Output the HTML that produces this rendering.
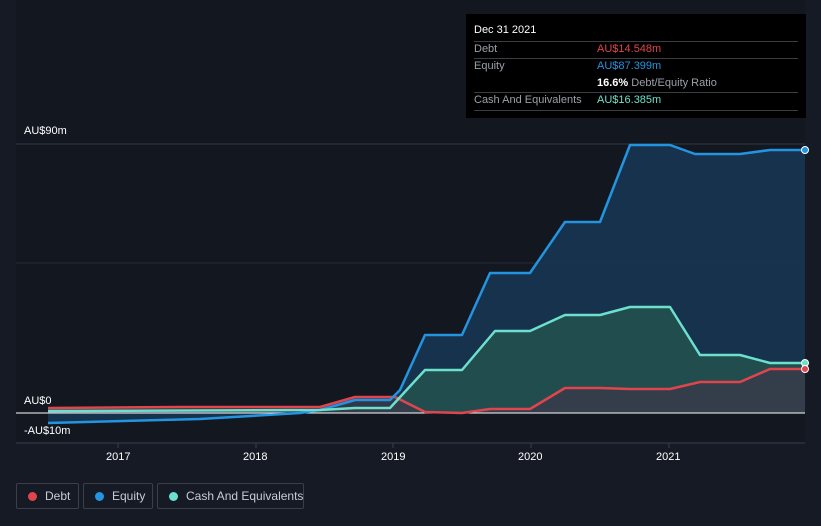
<!DOCTYPE html>
<html><head><meta charset="utf-8"><style>
body{margin:0;width:821px;height:526px;background:#151a25;font-family:"Liberation Sans",sans-serif;overflow:hidden;position:relative}
.tip{position:absolute;left:466px;top:14px;width:340px;height:104px;background:#000;color:#fff;font-size:11px}
.tip .r{position:absolute;left:8px;width:324px;border-top:1px solid #3a3d44}
.tip span{position:absolute;white-space:nowrap}
.lg{position:absolute;top:483px;height:26px;border:1px solid #3a3f4a;border-radius:2px;color:#c8ccd3;font-size:12px;line-height:24px;box-sizing:border-box;white-space:nowrap}
.lg i{position:absolute;left:11px;top:8px;width:9px;height:9px;border-radius:50%}
.lbl{position:absolute;color:#fff;font-size:11px}
</style></head><body>
<svg width="821" height="526" style="position:absolute;left:0;top:0">
<rect x="16" y="0" width="789" height="443" fill="#121720"/>
<line x1="16" y1="144" x2="805" y2="144" stroke="#333844"/>
<line x1="16" y1="263" x2="805" y2="263" stroke="#262b36"/>
<line x1="16" y1="443" x2="805" y2="443" stroke="#3a3f4a"/>
<g stroke="#3a3f4a"><line x1="118" y1="443" x2="118" y2="448"/><line x1="256" y1="443" x2="256" y2="448"/><line x1="393" y1="443" x2="393" y2="448"/><line x1="531" y1="443" x2="531" y2="448"/><line x1="669" y1="443" x2="669" y2="448"/></g>
<polygon fill="#173552" opacity="0.9" points="48,423 200,419 300,413 320,410 355,400 390,400 400,390 425,335 462,335 490,273 530,273 565,222 600,222 630,145 670,145 695,154 740,154 770,150 805,150 805,413 48,413"/>
<polygon fill="#245450" opacity="0.8" points="48,411 320,410 355,408 390,408 425,370 462,370 495,331 530,331 565,315 600,315 630,307 670,307 700,355 740,355 770,363 805,363 805,413 48,413"/>
<polygon fill="#3a3a48" opacity="0.8" points="48,408 180,407 320,407 355,397 395,397 425,412 462,413 490,409 530,409 565,388 600,388 630,389 670,389 700,382 740,382 770,369 805,369 805,413 48,413"/>
<line x1="16" y1="413" x2="805" y2="413" stroke="#fff" stroke-width="1"/>
<g fill="none" stroke-width="2.5" stroke-linejoin="round">
<polyline stroke="#e0454d" points="48,408 180,407 320,407 355,397 395,397 425,412 462,413 490,409 530,409 565,388 600,388 630,389 670,389 700,382 740,382 770,369 805,369"/>
<polyline stroke="#2394df" points="48,423 200,419 300,413 320,410 355,400 390,400 400,390 425,335 462,335 490,273 530,273 565,222 600,222 630,145 670,145 695,154 740,154 770,150 805,150"/>
<polyline stroke="#6ce0cc" points="48,411 320,410 355,408 390,408 425,370 462,370 495,331 530,331 565,315 600,315 630,307 670,307 700,355 740,355 770,363 805,363"/>
</g>
<circle cx="805" cy="150" r="3.5" fill="#2394df" stroke="#fff"/>
<circle cx="805" cy="363" r="3.5" fill="#6ce0cc" stroke="#fff"/>
<circle cx="805" cy="369" r="3.5" fill="#e0454d" stroke="#fff"/>
</svg>
<div class="lbl" style="left:24px;top:125px">AU$90m</div>
<div class="lbl" style="left:24px;top:395px">AU$0</div>
<div class="lbl" style="left:24px;top:425px">-AU$10m</div>
<div class="lbl" style="left:106px;top:451px">2017</div>
<div class="lbl" style="left:243px;top:451px">2018</div>
<div class="lbl" style="left:381px;top:451px">2019</div>
<div class="lbl" style="left:518px;top:451px">2020</div>
<div class="lbl" style="left:656px;top:451px">2021</div>
<div class="tip">
<span style="left:8px;top:10px">Dec 31 2021</span>
<div class="r" style="top:27px"></div>
<span style="left:8px;top:29px;color:#9ba0a8">Debt</span><span style="left:131px;top:29px;color:#e0454d">AU$14.548m</span>
<div class="r" style="top:44px"></div>
<span style="left:8px;top:46px;color:#9ba0a8">Equity</span><span style="left:131px;top:46px;color:#2394df">AU$87.399m</span>
<span style="left:131px;top:63px"><b>16.6%</b> <span style="position:static;color:#9ba0a8">Debt/Equity Ratio</span></span>
<div class="r" style="top:78px"></div>
<span style="left:8px;top:80px;color:#9ba0a8">Cash And Equivalents</span><span style="left:131px;top:80px;color:#6ce0cc">AU$16.385m</span>
<div class="r" style="top:96px"></div>
</div>
<div class="lg" style="left:16px;width:63px"><i style="background:#e0454d"></i><span style="position:absolute;left:28px">Debt</span></div>
<div class="lg" style="left:83px;width:70px"><i style="background:#2394df"></i><span style="position:absolute;left:28px">Equity</span></div>
<div class="lg" style="left:157px;width:147px"><i style="background:#6ce0cc"></i><span style="position:absolute;left:28px">Cash And Equivalents</span></div>
</body></html>
